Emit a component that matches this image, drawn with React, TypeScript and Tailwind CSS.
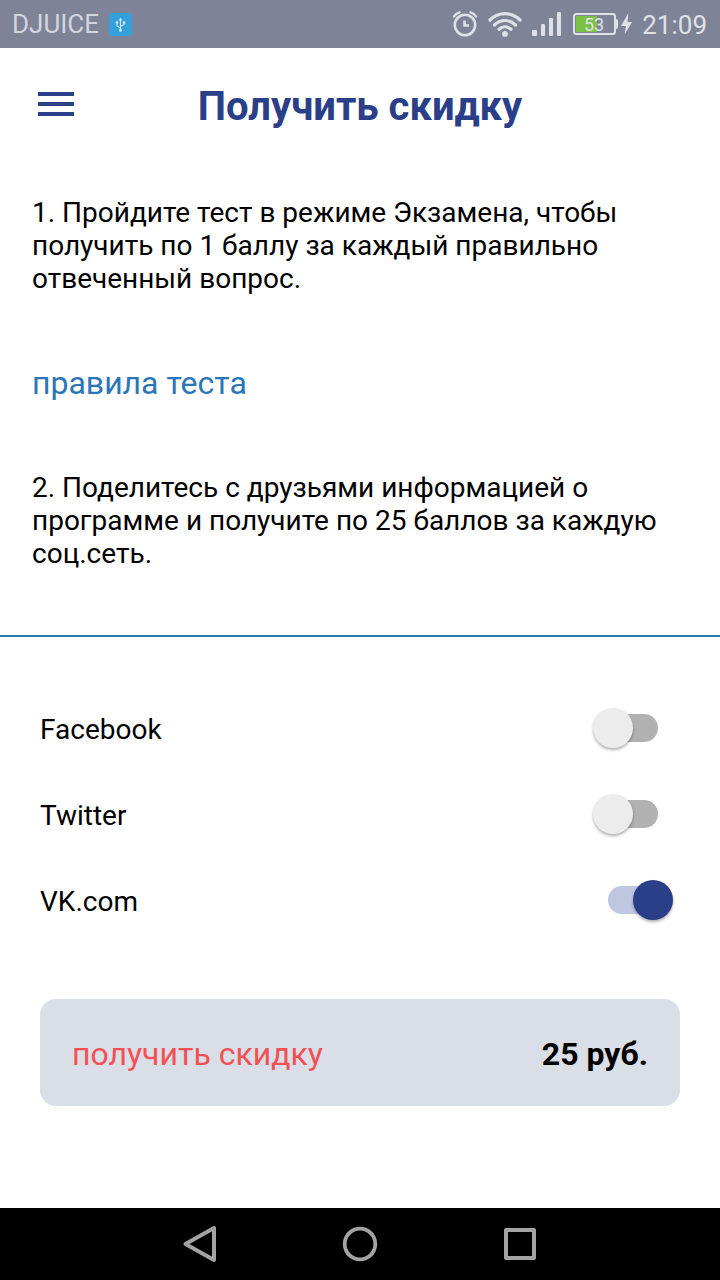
import { useState } from 'react';

function StatusBar() {
  return (
    <div className="flex h-12 items-center justify-between bg-[#7f8397] px-3 text-[26px] leading-8 text-[#dfe1e8]">
      <div className="flex items-center gap-2.5">
        <span className="text-[#d3d5de]">DJUICE</span>
        <svg width="23" height="23" viewBox="0 0 23 23" fill="none" aria-hidden="true">
          <rect width="23" height="23" rx="3.500" fill="#33a0dc" />
          <g stroke="#d8e8f2" strokeWidth="1.100">
            <path d="M11.500 6v11M11.500 15l-3.500-2V9.500M11.500 13.500l3.500-2V9.500" />
          </g>
          <path d="M11.500 4.500l1.700 3h-3.400z" fill="#d8e8f2" />
          <circle cx="11.500" cy="17.300" r="1.500" fill="#d8e8f2" />
          <circle cx="8" cy="9.500" r="1.300" fill="#d8e8f2" />
          <rect x="13.800" y="8.300" width="2.400" height="2.400" fill="#d8e8f2" />
        </svg>
      </div>
      <div className="flex items-center pr-px">
        <svg width="180" height="32" viewBox="452 8 180 32" fill="none" aria-hidden="true">
          <g stroke="#dfe1e8" strokeLinecap="round">
            <circle cx="465" cy="25" r="10.200" strokeWidth="2.600" />
            <path d="M464.500 20.500v5h4.500" strokeWidth="2.600" strokeLinecap="butt" />
            <path d="M454 16.500q1.500-2.800 5.500-4.200M476 16.500q-1.500-2.800-5.500-4.200" strokeWidth="2.400" />
            <path d="M490 20c8.500-8.500 21.500-8.500 30 0M494.500 25c6-6 15-6 21 0M499 29.300c3.700-3.300 8.300-3.300 12 0" strokeWidth="3.200" />
          </g>
          <g fill="#dfe1e8">
            <circle cx="505" cy="33.900" r="2.900" />
            <rect x="532" y="30" width="5" height="6" rx="1" />
            <rect x="541" y="24" width="4" height="12" rx="1" />
            <rect x="549" y="18" width="4" height="18" rx="1" />
            <rect x="557" y="12" width="4" height="24" rx="1" />
            <path d="M614 19h2q2 0 2 2v6q0 2-2 2h-2z" />
            <path d="M628.500 13l-7.500 13h5l-1.500 8.500 7.500-12.500h-4.500z" />
          </g>
          <rect x="574" y="14" width="41" height="20" rx="2.500" stroke="#dfe1e8" strokeWidth="2" />
          <rect x="576" y="16" width="21" height="16" fill="#7cc142" />
          <text x="594" y="31" textAnchor="middle" fontSize="18" fill="#dfe1e8">53</text>
        </svg>
        <span className="pt-0.5 pl-2.5">21:09</span>
      </div>
    </div>
  );
}

type SwitchRowProps = { label: string; initial?: boolean };

function SwitchRow({ label, initial = false }: SwitchRowProps) {
  const [on, setOn] = useState(initial);
  return (
    <label className="flex h-[86px] items-center justify-between text-[28px] leading-8">
      <span className="pt-1">{label}</span>
      <input
        type="checkbox"
        role="switch"
        checked={on}
        onChange={(e) => setOn(e.target.checked)}
        className="relative h-10 w-20 cursor-pointer appearance-none before:absolute before:inset-x-[15px] before:inset-y-1.5 before:rounded-full before:bg-[#b1b1b1] after:absolute after:top-0 after:left-0 after:size-10 after:rounded-full after:bg-[#ececec] after:shadow-[0_2px_3px_rgba(0,0,0,0.3)] checked:before:bg-[#bfc6df] checked:after:left-10 checked:after:bg-[#2a3f88]"
      />
    </label>
  );
}

function NavBar() {
  return (
    <nav className="flex h-18 items-center justify-center gap-[120px] bg-black">
      <button type="button" aria-label="Назад" className="size-10">
        <svg width="40" height="40" viewBox="0 0 40 40" fill="none" stroke="#a3a3a3" strokeWidth="4" strokeLinejoin="round" aria-hidden="true">
          <path d="M34 4v32L5.500 20z" />
        </svg>
      </button>
      <button type="button" aria-label="Домой" className="size-10">
        <svg width="40" height="40" viewBox="0 0 40 40" fill="none" stroke="#a3a3a3" strokeWidth="3.800" aria-hidden="true">
          <circle cx="20" cy="20" r="15.300" />
        </svg>
      </button>
      <button type="button" aria-label="Недавние" className="size-10">
        <svg width="40" height="40" viewBox="0 0 40 40" fill="none" stroke="#a3a3a3" strokeWidth="4" strokeLinejoin="round" aria-hidden="true">
          <rect x="6" y="6" width="28" height="28" />
        </svg>
      </button>
    </nav>
  );
}

export default function App() {
  return (
    <div className="flex min-h-screen flex-col bg-white font-['Roboto',sans-serif] text-black">
      <StatusBar />
      <header className="grid h-28 grid-cols-[1fr_auto_1fr] items-center px-[38px]">
        <button type="button" aria-label="Меню" className="flex w-9 flex-col gap-1.5">
          <span className="h-1 w-full bg-[#2a3f88]" />
          <span className="h-1 w-full bg-[#2a3f88]" />
          <span className="h-1 w-full bg-[#2a3f88]" />
        </button>
        <h1 className="pt-1.5 text-[40px] leading-12 font-bold text-[#2a3f88]">Получить скидку</h1>
      </header>
      <main className="flex grow flex-col">
        <section className="flex flex-col items-start px-8 pt-9 pb-[65px] text-[28px] leading-[33px]">
          <p>1. Пройдите тест в режиме Экзамена, чтобы получить по 1 баллу за каждый правильно отвеченный вопрос.</p>
          <a href="#rules" className="my-[68px] text-[32px] leading-10 text-[#2a76b8]">правила теста</a>
          <p>2. Поделитесь с друзьями информацией о программе и получите по 25 баллов за каждую соц.сеть.</p>
        </section>
        <section className="border-t-2 border-[#2a7ab5] pt-12 pr-[47px] pl-10">
          <SwitchRow label="Facebook" />
          <SwitchRow label="Twitter" />
          <SwitchRow label="VK.com" initial />
        </section>
        <div className="px-10 pt-14 pb-10">
          <button type="button" className="flex w-full items-center justify-between rounded-2xl bg-[#dadee7] px-8 pt-[34px] pb-[30px] text-[32px] leading-[43px]">
            <span className="text-[#f35054]">получить скидку</span>
            <span className="font-bold">25 руб.</span>
          </button>
        </div>
      </main>
      <NavBar />
    </div>
  );
}
